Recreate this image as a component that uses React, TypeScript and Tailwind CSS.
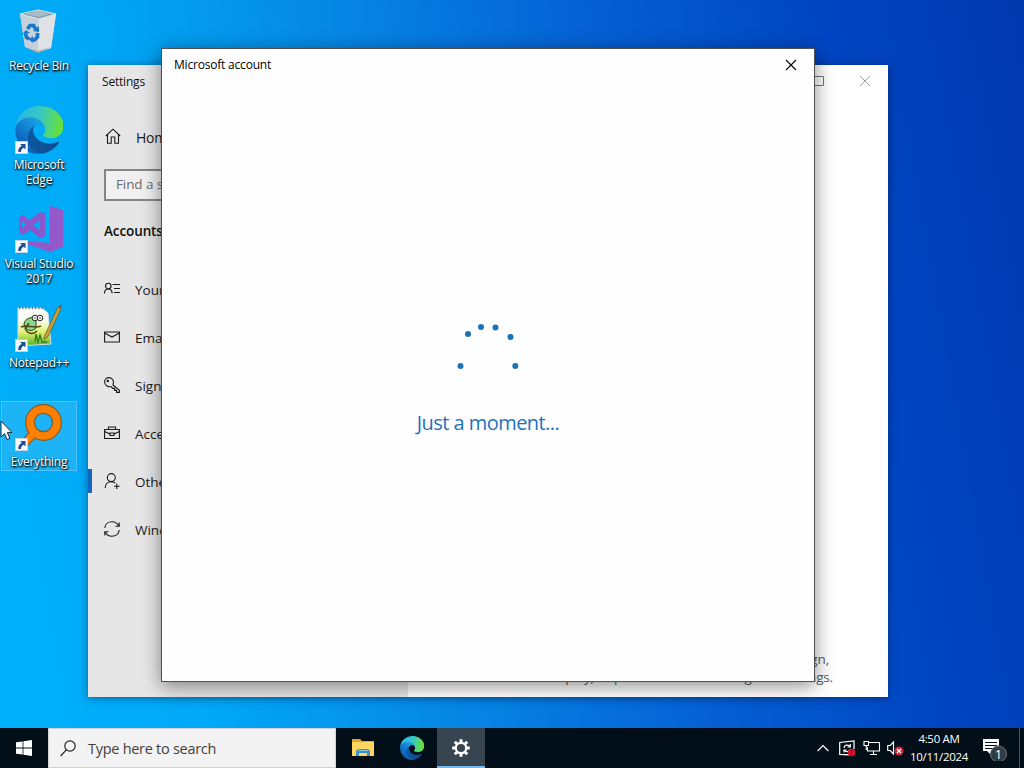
import type { ReactNode } from 'react';

const ShortcutArrow = () => (
  <svg className="absolute bottom-0 left-0" width="13" height="13" viewBox="0 0 13 13">
    <rect x=".5" y=".5" width="12" height="12" fill="#f7f9fb" stroke="#c5d3de" />
    <path d="M5 3h5.500v5.500L8.700 6.700C6.800 7.800 6 9 6 11H3.300C3 8.300 4.300 6.100 6.800 4.800z" fill="#1f4f92" />
  </svg>
);

const RecycleIcon = () => (
  <svg width="48" height="48" viewBox="0 0 48 48">
    <path d="M5 7l18-4 18 4-5 34-12 4-14-5z" fill="#d5dde3" />
    <path d="M5 7l19 5-1 33-13-5z" fill="#c4d1db" />
    <path d="M41 7l-17 5-1 33 13-4z" fill="#dfe2e5" />
    <path d="M5 7l18-4 18 4-17 5z" fill="#7f9eb1" stroke="#d9e6ee" strokeWidth="1.200" />
    <path d="M10 7l13-3 12 3-11 3z" fill="#a9bcc8" />
    <path d="M10 40l13 4 13-4-13 6z" fill="#b9aaa7" />
    <g fill="none" stroke="#1877c9" strokeWidth="3.600">
      <path d="M12.500 22l2.500-3.500 3.500 0 2.500 4" />
      <path d="M22.500 26l0 4-3 3-3 0" />
      <path d="M14.500 32l-3-1.500-1-4" />
    </g>
    <path d="M18 24l6 1 0-6zM18 29v7l-4-3.500zM7.500 27l3.500-4 4 3z" fill="#1877c9" />
  </svg>
);

const EdgeIcon = ({ size, id }: { size: number; id: string }) => (
  <svg width={size} height={size} viewBox="0 0 256 256">
    <defs>
      <linearGradient id={id + 'a'} x1="60" y1="177" x2="241" y2="177" gradientUnits="userSpaceOnUse">
        <stop stopColor="#0c59a4" />
        <stop offset="1" stopColor="#114a8b" />
      </linearGradient>
      <linearGradient id={id + 'b'} x1="140" y1="100" x2="40" y2="220" gradientUnits="userSpaceOnUse">
        <stop stopColor="#1b9de2" />
        <stop offset=".7" stopColor="#0f6fc6" />
        <stop offset="1" stopColor="#0f5bb0" />
      </linearGradient>
      <linearGradient id={id + 'c'} x1="10" y1="80" x2="240" y2="120" gradientUnits="userSpaceOnUse">
        <stop stopColor="#2bb5e4" />
        <stop offset=".5" stopColor="#36c8c4" />
        <stop offset="1" stopColor="#66e03c" />
      </linearGradient>
    </defs>
    <path fill={`url(#${id}a)`} d="M231 190a93 93 0 0 1-11 5 102 102 0 0 1-36 6c-47 0-88-32-88-74a31 31 0 0 1 16-27c-43 2-54 46-54 72 0 74 68 81 82 81 8 0 20-2 27-4l1-1a128 128 0 0 0 67-53 4 4 0 0 0-4-5z" />
    <path fill={`url(#${id}b)`} d="M106 241a79 79 0 0 1-23-21 81 81 0 0 1 29-120c3-2 9-4 16-4a33 33 0 0 1 27 13 33 33 0 0 1 6 20c0-1 25-80-80-80-44 0-80 42-80 79a130 130 0 0 0 12 56 128 128 0 0 0 156 66 75 75 0 0 1-63-9z" />
    <path fill={`url(#${id}c)`} d="M152 149c-1 1-3 3-3 6 0 3 2 6 5 8 15 10 43 9 43 9a62 62 0 0 0 31-9 64 64 0 0 0 31-55c0-23-8-38-11-44C227 23 182 0 134 0A128 128 0 0 0 1 126c1-36 37-66 80-66 4 0 24 1 42 10 17 9 25 19 31 30 7 11 8 26 8 31 0 6-3 14-10 18z" />
  </svg>
);

const VisualStudioIcon = () => (
  <svg width="48" height="48" viewBox="0 0 48 48">
    <path d="M35 1l13 4v37l-13 5-23-8v-3l23 2z" fill="#9459c8" />
    <path fillRule="evenodd" d="M25 7l5 2v22l-5 2-10-8-7 5-4-2V12l4-2 7 5zM25 15l-7 5 7 5zM7 16v7l4-3.500z" fill="#8a58cc" />
  </svg>
);

const NotepadIcon = () => (
  <svg width="48" height="48" viewBox="0 0 48 48">
    <defs>
      <linearGradient id="npp" x1="0" y1="0" x2="0" y2="1">
        <stop offset=".3" stopColor="#fdfdf8" />
        <stop offset=".65" stopColor="#dff06a" />
        <stop offset="1" stopColor="#4fb02a" />
      </linearGradient>
    </defs>
    <path d="M3 4h24l6 5 3 31-33 2z" fill="url(#npp)" stroke="#d7dde0" />
    <path d="M4 4h24" stroke="#6c7981" strokeWidth="2.500" strokeDasharray="1.200 2" />
    <path d="M9 20c1-6 8-8 12-5l0 9c-5 5-11 2-12-4z" fill="#8bd98a" stroke="#2b4a20" />
    <circle cx="20" cy="14" r="2.800" fill="#fff" stroke="#222" />
    <circle cx="25" cy="14" r="2.800" fill="#fff" stroke="#222" />
    <path d="M19.500 14h1M24.500 14h1" stroke="#111" strokeWidth="1.500" />
    <path d="M6 23c7-3 12 2 20-1M10 24c2 6 8 7 12 3M14 19l-4 6" fill="none" stroke="#4d4a20" strokeWidth="1.600" />
    <path d="M20 38l1-8 2 8 2-7 2 7h5" fill="none" stroke="#2f7a1d" strokeWidth="1.300" />
    <path d="M30 31l13-28 3 1.500-13 28-4 3z" fill="#c9a33a" stroke="#775a20" strokeWidth=".8" />
    <path d="M43 3l3 1.500 1-4z" fill="#7a5438" />
  </svg>
);

const EverythingIcon = () => (
  <svg width="48" height="48" viewBox="0 0 48 48" fill="none">
    <path d="M19 30L8 42" stroke="#8a5a25" strokeWidth="9" />
    <circle cx="28.500" cy="19.500" r="13.500" stroke="#8a5a25" strokeWidth="10" />
    <path d="M19 30L8 42" stroke="#ff8000" strokeWidth="6.500" />
    <circle cx="28.500" cy="19.500" r="13.500" stroke="#ff8000" strokeWidth="7.500" />
  </svg>
);

const desktopIcons = [
  { label: 'Recycle Bin', icon: <RecycleIcon />, shortcut: false },
  { label: 'Microsoft Edge', icon: <EdgeIcon size={48} id="desk" />, shortcut: true },
  { label: 'Visual Studio 2017', icon: <VisualStudioIcon />, shortcut: true },
  { label: 'Notepad++', icon: <NotepadIcon />, shortcut: true },
  { label: 'Everything', icon: <EverythingIcon />, shortcut: true, selected: true },
];

const NavSvg = ({ children }: { children: ReactNode }) => (
  <svg className="mb-0.5 shrink-0" width="16" height="16" viewBox="0 0 16 16" fill="none" stroke="#1a1a1a" strokeWidth="1.100">
    {children}
  </svg>
);

const navItems = [
  {
    label: 'Your info',
    icon: (
      <>
        <circle cx="4.300" cy="5" r="2.800" />
        <path d="M.5 12.500c0-6 7.600-6 7.600 0M8.500 3.500H16M10 7.500h6M10 11.500h6" />
      </>
    ),
  },
  {
    label: 'Email & accounts',
    icon: <path d="M.6 3h14.800v10H.6zM.6 4L8 8 15.400 4" />,
  },
  {
    label: 'Sign-in options',
    icon: (
      <>
        <path d="M9 8l6.400 5.200v2.200h-2.800v-2h-2v-2H8.800L7 9.500C3.500 10.300.7 8.200.6 5 .6 2.300 2.600.6 5 .6 8.600.6 10.700 4.300 9 8z" />
        <circle cx="3.800" cy="4" r=".7" />
      </>
    ),
  },
  {
    label: 'Access work or school',
    icon: <path d="M.6 4.500h14.800v9H.6zM4.500 4.500v-2.500h7v2.500M.6 6.500L6 9M15.400 6.500L10 9M6 8h4v2.500H6z" />,
  },
  {
    label: 'Other users',
    icon: (
      <>
        <circle cx="7.300" cy="4.600" r="4" />
        <path d="M1.200 15c0-4 2.600-6.400 6.100-6.400 1.500 0 2.900.5 3.900 1.400M12.800 10.500v5.500M10 13.200h5.600" />
      </>
    ),
    active: true,
  },
  {
    label: 'Windows backup',
    icon: <path d="M.8 7C1 3 4.300.8 8 .8c3 0 5.500 1.500 6.800 4.200M15.200 1.500v3.700h-3.700M15.200 9c-.2 4-3.500 6.200-7.200 6.200-3 0-5.500-1.500-6.800-4.200M.8 14.500v-3.700h3.700" />,
  },
];

function SettingsWindow() {
  return (
    <div className="absolute left-[88px] top-[65px] flex h-[632px] w-[800px] overflow-hidden bg-white shadow-[0_1px_8px_rgba(0,20,60,0.5)]">
      <div className="flex w-[320px] flex-col bg-[#e6e6e6]">
        <div className="flex h-8 items-center pl-[14px] pt-0.5 text-[12px] tracking-[-0.2px] text-[#111]">Settings</div>
        <div className="mt-4 flex h-12 items-center gap-[15px] pl-[17px] text-[14px] tracking-[-0.2px] text-[#1a1a1a]">
          <NavSvg>
            <path d="M.8 8L8 1.200 15.200 8M2.500 6.500v8.700h3.700V9h3.600v6.200h3.700V6.500" />
          </NavSvg>
          Home
        </div>
        <div className="ml-4 mt-2 flex h-8 w-[288px] items-center border-2 border-[#858585] bg-[#f0f0f0] pl-[10px] pb-0.5 text-[13.500px] tracking-[-0.1px] text-[#6b6b6b]">
          Find a setting
        </div>
        <div className="ml-4 mt-5 flex h-5 items-center text-[13.500px] font-semibold tracking-[-0.1px] text-[#111]">Accounts</div>
        <nav className="mt-[25px] flex flex-col">
          {navItems.map((item) => (
            <div key={item.label} className="flex h-12 items-center text-[13.500px] text-[#1a1a1a]">
              <span className={item.active ? 'mb-0.5 h-6 w-1 bg-[#1566c0]' : 'h-6 w-1'} />
              <div className="flex items-center gap-[15px] pl-3">
                <NavSvg>{item.icon}</NavSvg>
                {item.label}
              </div>
            </div>
          ))}
        </nav>
      </div>
      <div className="flex flex-1 flex-col">
        <div className="flex h-8 items-center justify-end gap-[35px] pr-[17px]">
          <svg width="10" height="10" viewBox="0 0 10 10" fill="none" stroke="#777">
            <path d="M.5.5h9v9h-9z" />
          </svg>
          <svg width="12" height="12" viewBox="0 0 12 12" fill="none" stroke="#a0a0a0">
            <path d="M1 1l10 10M11 1L1 11" />
          </svg>
        </div>
        <div className="mb-[11px] mt-auto w-[425px] self-start text-right text-[13.500px] leading-[18px] tracking-[-0.150px] text-[#5c5c5c]">
          <p className="pr-1">Set up this device as a kiosk — this could be a digital sign,</p>
          <p>interactive display, or public browser among other things.</p>
        </div>
      </div>
    </div>
  );
}

function AccountDialog() {
  return (
    <div className="absolute left-[161px] top-[48px] flex h-[634px] w-[654px] flex-col border border-[#4d5256] bg-[#fefefe] shadow-[0_4px_18px_rgba(0,0,0,0.45)]">
      <div className="flex h-8 items-center justify-between pl-3 pr-[17px] text-[12px] text-black">
        <span className="tracking-[-0.2px]">Microsoft account</span>
        <svg width="12" height="12" viewBox="0 0 12 12" fill="none" stroke="#000" strokeWidth="1.100">
          <path d="M1 1l10 10M11 1L1 11" />
        </svg>
      </div>
      <div className="flex flex-col items-center pt-[237px]">
        <svg width="66" height="56" viewBox="0 0 66 56" fill="#1a73b9">
          <circle cx="5.500" cy="48" r="3" />
          <circle cx="13" cy="16" r="3" />
          <circle cx="26" cy="9" r="3" />
          <circle cx="40.500" cy="9.500" r="3" />
          <circle cx="55.500" cy="19" r="3" />
          <circle cx="60.300" cy="48" r="3" />
        </svg>
        <p className="mt-[35px] text-[20px] leading-7 tracking-[-0.550px] text-[#1d72bb]">Just a moment...</p>
      </div>
    </div>
  );
}

function Taskbar() {
  return (
    <div className="flex h-10 items-stretch bg-[#020f18] text-white">
      <div className="flex w-12 items-center justify-center">
        <svg width="16" height="16" viewBox="0 0 16 16" fill="#fff">
          <path d="M0 2.300l6.600-.9v6.100H0zM7.400 1.300L16 0v7.500H7.400zM0 8.400h6.600v6.200L0 13.700zM7.400 8.400H16V16l-8.600-1.200z" />
        </svg>
      </div>
      <div className="flex w-[288px] items-center gap-3 border border-[#d0d3d5] bg-[#f3f3f3] pl-[11px] text-[14.500px] tracking-[-0.280px] text-[#414141]">
        <svg width="16" height="17" viewBox="0 0 16 17" fill="none" stroke="#222" strokeWidth="1.200">
          <circle cx="10" cy="6" r="5.200" />
          <path d="M6.300 9.800L.6 16" />
        </svg>
        <span className="pt-0.5">Type here to search</span>
      </div>
      <div className="ml-[3px] flex">
        <div className="flex w-12 items-center justify-center">
          <svg width="22" height="18" viewBox="0 0 22 18">
            <path d="M0 0h8l2 2h12v15H0z" fill="#e3a728" />
            <path d="M0 3h22v14H0z" fill="#ffd75e" />
            <path d="M4 17v-5l2-2h10l2 2v5h-3v-3H7v3z" fill="#3d8fc9" />
            <path d="M6 11.500h10" stroke="#80c5ea" />
          </svg>
        </div>
        <div className="flex w-[50px] items-center justify-center">
          <EdgeIcon size={24} id="bar" />
        </div>
        <div className="flex w-12 items-center justify-center border-b-2 border-[#76b9ed] bg-[#36454f] pt-0.5">
          <svg width="18" height="18" viewBox="-9 -9 18 18" fill="none" stroke="#fff">
            <circle r="5.200" strokeWidth="2.200" />
            <g strokeWidth="3">
              <path d="M0-5.700V-8.800M0 5.700V8.800M-5.700 0H-8.800M5.700 0H8.800" />
              <path d="M4.200 4.200l2 2M-4.200 4.200l-2 2M4.200-4.200l2-2M-4.200-4.200l-2-2" />
            </g>
          </svg>
        </div>
      </div>
      <div className="ml-auto flex items-center">
        <svg width="12" height="8" viewBox="0 0 12 8" fill="none" stroke="#fff" strokeWidth="1.200">
          <path d="M.6 7L6 1.500 11.400 7" />
        </svg>
        <svg className="ml-[10px]" width="17" height="17" viewBox="0 0 17 17" fill="none" stroke="#fff" strokeWidth="1.200">
          <path d="M9 14.500H.7v-12L15 1v8M.7 14.500L10 15" />
          <path d="M5 8c0-3 4-4 6-1.500M11.300 4v3H8.500M11 9c-.5 3-4 3.500-5.500 1.200M5 12.500V10h2.500" />
          <circle cx="12.500" cy="12.500" r="3.800" fill="#d9142c" stroke="none" />
          <path d="M12.500 10v3M12.500 14v1" stroke="#7b0613" />
        </svg>
        <svg className="ml-[7px]" width="18" height="16" viewBox="0 0 18 16" fill="none" stroke="#fff" strokeWidth="1.100">
          <path d="M6 2.500h10.500v8.500H4.500V7M10.500 11v3.500M7 14.500h7" />
          <path d="M1 1.500h4.500v4H1zM3.200 5.500v4h1.300" />
        </svg>
        <svg className="ml-[6px]" width="17" height="16" viewBox="0 0 17 16" fill="none">
          <path d="M.7 5.500h2.500L6.500 2v12L3.200 10.500H.7z" stroke="#fff" strokeWidth="1.100" />
          <circle cx="12" cy="11" r="4.500" fill="#d1273b" />
          <path d="M10 9l4 4M14 9l-4 4" stroke="#fff" strokeWidth="1.300" />
        </svg>
        <div className="ml-[5px] w-[60px] whitespace-nowrap text-center text-[11.500px] leading-[18px] tracking-[-0.3px]">
          <p>4:50 AM</p>
          <p>10/11/2024</p>
        </div>
        <svg className="ml-[13px]" width="26" height="26" viewBox="0 0 26 26">
          <path d="M1 4h16v12H9v4l-4-4H1z" fill="#fff" />
          <path d="M3 7.500h12M3 10.500h12M3 13.500h8" stroke="#020f18" />
          <circle cx="16.500" cy="19" r="8" fill="#303b42" stroke="#68737a" />
          <text x="16.500" y="23.500" fill="#fff" fontSize="13" textAnchor="middle">1</text>
        </svg>
        <div className="ml-[11px] mr-1 h-10 w-px bg-[#46515a]" />
      </div>
    </div>
  );
}

function App() {
  return (
    <div className="flex h-[768px] w-[1024px] flex-col overflow-hidden font-['Open_Sans','Noto_Sans',sans-serif]">
      <div className="relative flex-1 overflow-hidden bg-[linear-gradient(80deg,#00b0fa_0%,#00a9f6_18%,#068ae6_38%,#0560d4_62%,#0045c2_82%,#0038ae_100%)]">
        {/* desktop shortcuts */}
        <div className="ml-px flex w-[76px] flex-col gap-[29px] pt-[5px]">
          {desktopIcons.map((item) => (
            <div
              key={item.label}
              className={
                item.selected
                  ? 'flex h-[70px] flex-col items-center bg-[#45bff5]/40 pt-0.5 outline outline-1 -outline-offset-1 outline-[#6fcffb]/60'
                  : 'flex h-[70px] flex-col items-center pt-0.5'
              }
            >
              <div className="relative h-12 w-12 shrink-0">
                {item.icon}
                {item.shortcut && <ShortcutArrow />}
              </div>
              <p className="mt-[3px] w-[74px] text-center text-[12px] leading-[15px] tracking-[-0.250px] text-white [text-shadow:1px_1px_2px_#000,0_1px_2px_#000]">
                {item.label}
              </p>
            </div>
          ))}
        </div>

        <SettingsWindow />
        <AccountDialog />

        {/* mouse pointer */}
        <svg className="absolute left-0 top-[420px]" width="14" height="22" viewBox="0 0 14 22">
          <path d="M1 1v16l3.600-3.400 2.600 6 2.700-1.200-2.600-5.800H12z" fill="#fff" stroke="#1c2b38" />
        </svg>
      </div>
      <Taskbar />
    </div>
  );
}

export default App;
